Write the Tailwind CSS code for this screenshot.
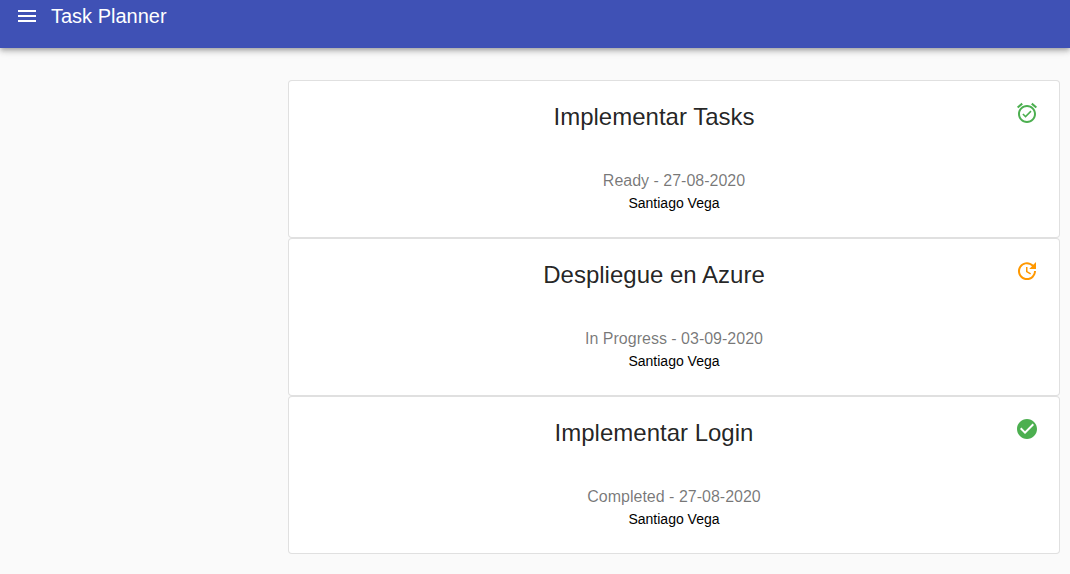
<!DOCTYPE html>
<html lang="es">
<head>
<meta charset="utf-8">
<title>Task Planner</title>
<script src="https://cdn.jsdelivr.net/npm/@tailwindcss/browser@4"></script>
</head>
<body class="min-h-screen bg-[#fafafa] font-['Liberation_Sans',Arial,sans-serif] text-black">
<header class="flex h-12 items-start bg-[#3f51b5] px-[15px] text-white shadow-[0_2px_4px_-1px_rgba(0,0,0,0.2),0_4px_5px_0_rgba(0,0,0,0.14),0_1px_10px_0_rgba(0,0,0,0.12)]">
  <button type="button" aria-label="Menu" class="mt-1 mr-3"><svg class="size-6" viewBox="0 0 24 24" fill="currentColor"><path d="M3 18h18v-2H3v2zm0-5h18v-2H3v2zm0-7v2h18V6H3z"/></svg></button>
  <h1 class="text-xl leading-8">Task Planner</h1>
</header>
<main class="ml-[288px] mr-[10px] pt-8 text-center">
  <article class="rounded border border-black/12 bg-white pb-6">
    <div class="flex items-start gap-3 p-4">
      <h2 class="flex-1 pt-1 text-2xl leading-8 text-black/87">Implementar Tasks</h2>
      <svg class="mt-1 mr-1 size-6 text-[#4caf50]" viewBox="0 0 24 24" fill="currentColor"><path d="M22 5.72l-4.6-3.86-1.29 1.53 4.6 3.86L22 5.72zM7.88 3.39L6.6 1.86 2 5.71l1.29 1.53 4.59-3.85zM12 4c-4.97 0-9 4.03-9 9s4.02 9 9 9c4.97 0 9-4.03 9-9s-4.03-9-9-9zm0 16c-3.87 0-7-3.13-7-7s3.13-7 7-7 7 3.13 7 7-3.13 7-7 7zm-1.46-5.47L8.41 12.4l-1.06 1.06 3.18 3.18 6-6-1.06-1.06-4.93 4.95z"/></svg>
    </div>
    <p class="mt-5 text-base leading-6 text-black/54">Ready - 27-08-2020</p>
    <p class="text-sm leading-5">Santiago Vega</p>
  </article>
  <article class="rounded border border-black/12 bg-white pb-6">
    <div class="flex items-start gap-3 p-4">
      <h2 class="flex-1 pt-1 text-2xl leading-8 text-black/87">Despliegue en Azure</h2>
      <svg class="mt-1 mr-1 size-6 text-[#ff9800]" viewBox="0 0 24 24" fill="currentColor"><path d="M21 10.12h-6.78l2.74-2.82c-2.73-2.7-7.15-2.8-9.88-.1-2.73 2.71-2.73 7.08 0 9.79s7.15 2.71 9.88 0C18.32 15.65 19 14.08 19 12.1h2c0 1.98-.88 4.55-2.64 6.29-3.51 3.48-9.21 3.48-12.72 0-3.5-3.47-3.53-9.11-.02-12.58s9.14-3.47 12.65 0L21 3v7.12zM12.5 8v4.25l3.5 2.08-.72 1.21L11 13V8h1.5z"/></svg>
    </div>
    <p class="mt-5 text-base leading-6 text-black/54">In Progress - 03-09-2020</p>
    <p class="text-sm leading-5">Santiago Vega</p>
  </article>
  <article class="rounded border border-black/12 bg-white pb-6">
    <div class="flex items-start gap-3 p-4">
      <h2 class="flex-1 pt-1 text-2xl leading-8 text-black/87">Implementar Login</h2>
      <svg class="mt-1 mr-1 size-6 text-[#4caf50]" viewBox="0 0 24 24" fill="currentColor"><path d="M12 2C6.48 2 2 6.48 2 12s4.48 10 10 10 10-4.48 10-10S17.52 2 12 2zm-2 15l-5-5 1.41-1.41L10 14.17l7.59-7.59L19 8l-9 9z"/></svg>
    </div>
    <p class="mt-5 text-base leading-6 text-black/54">Completed - 27-08-2020</p>
    <p class="text-sm leading-5">Santiago Vega</p>
  </article>
</main>
</body>
</html>
